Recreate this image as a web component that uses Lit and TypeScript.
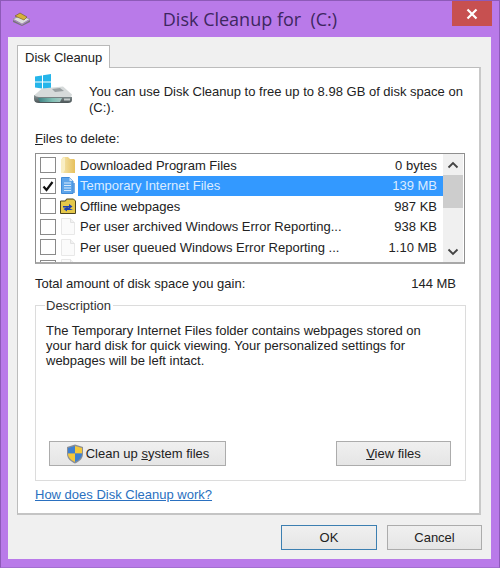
import { LitElement, html, css, svg } from "lit";
import { customElement } from "lit/decorators.js";

const blank = svg`<path d="M1.500 .5h9l4 4v12h-13z" fill="#fbfbfb" stroke="#e8e8e8"/><path d="M10.500 .5v4h4" fill="#f2f2f2" stroke="#e2e2e2"/>`;
const folder = svg`<defs><linearGradient id="fg" x1="0" x2="1" y1="0" y2="0"><stop offset="0" stop-color="#f7e9b4"/><stop offset="1" stop-color="#e6c05c"/></linearGradient></defs><path d="M1 16V3l2-3h5l2 2h4l1 1v13z" fill="url(#fg)"/><path d="M1 16V3l3-3 1 1v12l-2 3z" fill="#f9eec4"/>`;
const bluedoc = svg`<path d="M1.500 .5h8l3.500 3.500v12.500h-11.500z" fill="#5ea5ea" stroke="#3f8ad8"/><path d="M9.500 .5v3.500h3.500z" fill="#cfe4f8"/><path d="M4 6h7M4 8.500h7M4 11h7M4 13.500h7" stroke="#d8eafb" stroke-width="1"/><path d="M13 6h2v10h-2z" fill="#3f8ad8" opacity=".7"/>`;
const offline = svg`<path d="M.5 15.500V3h5l1-2h7l2 2v12.500z" fill="#e5c84a" stroke="#4c4420" stroke-width="1"/><path d="M3 8h6V6l3.500 2.500L9 11V9.500H3z" fill="#1d3fb0"/><path d="M13 12H7v1.500L3.500 11 7 9" fill="#1d3fb0"/>`;

const rows = [
  { name: "Downloaded Program Files", size: "0 bytes", icon: folder, checked: false, selected: false },
  { name: "Temporary Internet Files", size: "139 MB", icon: bluedoc, checked: true, selected: true },
  { name: "Offline webpages", size: "987 KB", icon: offline, checked: false, selected: false },
  { name: "Per user archived Windows Error Reporting...", size: "938 KB", icon: blank, checked: false, selected: false },
  { name: "Per user queued Windows Error Reporting ...", size: "1.10 MB", icon: blank, checked: false, selected: false },
  { name: "", size: "", icon: blank, checked: false, selected: false },
];

@customElement("app-root")
export class AppRoot extends LitElement {
  static styles = css`
    :host { display: block; width: 500px; height: 568px; box-sizing: border-box; background: #b97ae9; border: 1px solid #8d5ab8; border-bottom-color: #a36fd0;
      font-family: "Liberation Sans", Arial, sans-serif; font-size: 12.500px; color: #222; position: relative; overflow: hidden; }
    .title { height: 36px; display: flex; align-items: center; justify-content: center; position: relative; font-size: 18px; color: #3d2760; font-family: "Open Sans", sans-serif; box-sizing: border-box; }
    .title .t { white-space: pre; }
    .app-icon { position: absolute; left: 11px; top: 11px; }
    .close { position: absolute; left: 451px; top: 0; width: 40px; height: 25px; background: #c75050; display: flex; align-items: center; justify-content: center; }
    .client { width: 483px; height: 522px; margin-left: 7px; background: #f0f0f0; box-sizing: border-box; padding: 8px 10px 0 9px; display: flex; flex-direction: column; }
    .tab { width: 93px; height: 23px; box-sizing: border-box; background: #fff; border: 1px solid #b9b9b9; border-bottom: 0; margin-bottom: -1px; position: relative; z-index: 1; display: flex; align-items: center; padding-left: 7px; font-size: 13px; }
    .panel { width: 464px; height: 448px; box-sizing: border-box; background: #fff; border: 1px solid #bcbcbc; border-right: 2px solid #c9c9c9; border-bottom: 2px solid #c4c4c4; padding: 0 15px 0 17px; display: flex; flex-direction: column; }
    .intro { display: flex; height: 60px; align-items: flex-start; }
    .intro svg { margin-top: 5px; margin-left: -1px; flex: none; }
    .intro p { margin: 16px 0 0 16px; font-size: 13px; line-height: 16px; width: 380px; }
    .label { height: 16px; line-height: 16px; margin-top: 3px; font-size: 13px; }
    u { text-underline-offset: 1px; }
    .list { margin-top: 6px; width: 430px; height: 111px; box-sizing: border-box; border: 1px solid #8f8f8f; border-bottom: 2px solid #a8a8a8; display: flex; overflow: hidden; padding-top: 1px; }
    .rows { flex: 1; min-width: 0; }
    .row { height: 20.500px; display: flex; align-items: center; font-size: 13px; }
    .cb { width: 16px; height: 16px; box-sizing: border-box; border: 1px solid #8a8a8a; margin: 0 4px 0 4px; background: #fff; flex: none; display: flex; align-items: center; justify-content: center; }
    .ic { width: 16px; height: 17px; flex: none; }
    .txt { margin-left: 2px; flex: 1; display: flex; align-items: center; height: 100%; padding: 0 6px 0 2px; justify-content: space-between; white-space: nowrap; }
    .row.sel .txt { background: #3399ff; color: #dcecff; }
    .sb { width: 20px; margin-right: 1px; background: #f0f0f0; flex: none; display: flex; flex-direction: column; align-items: center; margin-top: -1px; }
    .sb .arrow { height: 21px; display: flex; align-items: center; justify-content: center; width: 100%; }
    .thumb { width: 100%; height: 33px; background: #cdcdcd; }
    .gap { flex: 1; }
    .total { margin-top: 12px; height: 16px; width: 421px; display: flex; justify-content: space-between; font-size: 13px; line-height: 16px; }
    fieldset { margin: 6px 0 0; padding: 0 0 0 10px; width: 431px; height: 183px; box-sizing: border-box; border: 1px solid #dcdcdc; min-inline-size: 0; display: block; }
    legend { padding: 0 2px 0 1px; font-size: 13px; line-height: 15px; margin-left: -1px; color: #333; }
    .desc { margin: 10px 0 0 0; font-size: 13px; line-height: 15px; width: 400px; }
    .btns { display: flex; justify-content: space-between; margin: 73px 14px 0 3px; }
    .btn { height: 25px; box-sizing: border-box; border: 1px solid #acacac; background: linear-gradient(#f0f0f0, #e5e5e5); display: flex; align-items: center; justify-content: center; font-size: 13px; }
    .b1 { width: 177px; }
    .b1 svg { margin-right: 2px; }
    .b2 { width: 115px; }
    .link { margin-top: 6px; color: #2a70c0; text-decoration: underline; font-size: 13px; line-height: 16px; text-underline-offset: 1px; }
    .foot { display: flex; justify-content: flex-end; gap: 10px; margin-top: 10px; margin-right: -1px; }
    .foot .btn { width: 96px; }
    .foot .btn.cancel { width: 95px; }
    .foot .ok { border-color: #3c7fb1; }
  `;

  render() {
    return html`
      <div class="title">
        <svg class="app-icon" width="20" height="14" viewBox="0 0 20 14">
          <path d="M1 7l7-3 10 3-8 5z" fill="#ddd" stroke="#888" stroke-width=".6"/>
          <path d="M3 4l5-3 7 4-3 3z" fill="#d6b13a" stroke="#6a5520" stroke-width=".6"/>
          <path d="M1 8l9 5 8-5v2l-8 4-9-4z" fill="#777"/>
        </svg>
        <span class="t">Disk Cleanup for  (C:)</span>
        <div class="close">
          <svg width="12" height="12" viewBox="0 0 12 12"><path d="M1.500 1.500l9 9M10.500 1.500l-9 9" stroke="#fff" stroke-width="2.200"/></svg>
        </div>
      </div>
      <div class="client">
        <div class="tab">Disk Cleanup</div>
        <div class="panel">
          <div class="intro">
            <svg width="39" height="32" viewBox="0 0 39 32">
              <defs>
                <linearGradient id="df" x1="0" x2="0" y1="0" y2="1"><stop offset="0" stop-color="#8b9698"/><stop offset="1" stop-color="#4b5557"/></linearGradient>
                <linearGradient id="dg" x1="0" x2="1" y1="0" y2="0"><stop offset="0" stop-color="#3c7f82"/><stop offset=".6" stop-color="#7fbfb4"/><stop offset="1" stop-color="#a8c8c4"/></linearGradient>
              </defs>
              <path d="M1 3.500l7-1v6H1zM9 2.300l8-1.200V8.500H9zM1 9.500h7v6l-7-1zM9 9.500h8v7.400l-8-1.200z" fill="#25b5ea"/>
              <path d="M8 15.500l21-2 9 8-1 3-36 1-1-3z" fill="#d6dada"/>
              <path d="M18 16l8-1 4 3-9 1z" fill="#9aa0a2"/>
              <path d="M0 22q2 2 5 2h33v3q0 3-4 3H5q-5 0-5-4z" fill="url(#df)"/>
              <path d="M4 25h24l-2 4H6z" fill="url(#dg)"/>
              <path d="M30 25.500h6v2h-6z" fill="#c3caca"/>
            </svg>
            <p>You can use Disk Cleanup to free up to 8.98 GB of disk space on (C:).</p>
          </div>
          <div class="label"><u>F</u>iles to delete:</div>
          <div class="list">
            <div class="rows">
              ${rows.map((r) => html`
                <div class="row ${r.selected ? "sel" : ""}">
                  <span class="cb">${r.checked ? html`<svg width="12" height="12" viewBox="0 0 12 12"><path d="M1.500 6.500L4.500 10 10.500 2" fill="none" stroke="#111" stroke-width="2.200"/></svg>` : ""}</span>
                  <svg class="ic" viewBox="0 0 16 17">${r.icon}</svg>
                  <span class="txt"><span>${r.name}</span><span>${r.size}</span></span>
                </div>`)}
            </div>
            <div class="sb">
              <div class="arrow"><svg width="12" height="8" viewBox="0 0 12 8"><path d="M1.500 6.500L6 2l4.500 4.500" fill="none" stroke="#444" stroke-width="1.800"/></svg></div>
              <div class="thumb"></div>
              <div class="gap"></div>
              <div class="arrow"><svg width="12" height="8" viewBox="0 0 12 8"><path d="M1.500 1.500L6 6l4.500-4.500" fill="none" stroke="#444" stroke-width="1.800"/></svg></div>
            </div>
          </div>
          <div class="total"><span>Total amount of disk space you gain:</span><span>144 MB</span></div>
          <fieldset>
            <legend>Description</legend>
            <p class="desc">The Temporary Internet Files folder contains webpages stored on your hard disk for quick viewing. Your personalized settings for webpages will be left intact.</p>
            <div class="btns">
              <div class="btn b1">
                <svg width="18" height="20" viewBox="0 0 18 20">
                  <path d="M9 .5l8 2.500v7c0 4.500-3.500 7.500-8 9.500-4.500-2-8-5-8-9.500V3z" fill="#8a8f96"/>
                  <path d="M9 2L2 4v5.500h7z" fill="#3d7fd0"/><path d="M9 2l7 2v5.500H9z" fill="#f3c83c"/>
                  <path d="M2 9.500h7V18c-4-1.800-7-4.500-7-8.500z" fill="#f3c83c"/><path d="M16 9.500H9V18c4-1.800 7-4.500 7-8.500z" fill="#3d7fd0"/>
                </svg>
                <span>Clean up <u>s</u>ystem files</span>
              </div>
              <div class="btn b2"><span><u>V</u>iew files</span></div>
            </div>
          </fieldset>
          <div class="link">How does Disk Cleanup work?</div>
        </div>
        <div class="foot">
          <div class="btn ok">OK</div>
          <div class="btn cancel">Cancel</div>
        </div>
      </div>
    `;
  }
}
